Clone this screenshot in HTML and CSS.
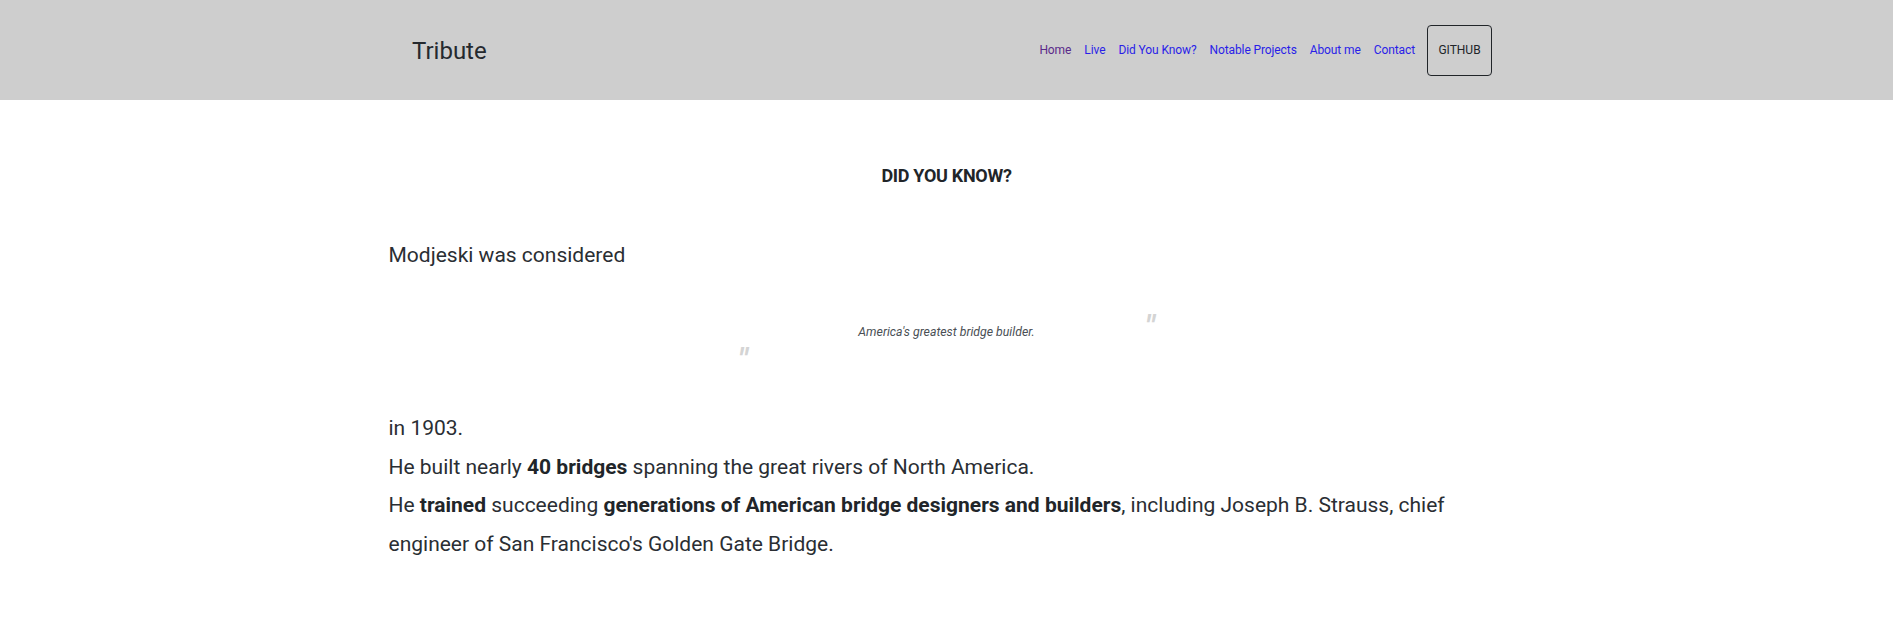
FILE: index.html
```html
<!DOCTYPE html>
<html lang="en">
<head>
<meta charset="utf-8">
<title>Tribute</title>
<link rel="stylesheet" href="styles.css">
</head>
<body>
<header class="navbar">
  <div class="nav-inner">
    <a class="brand" href="#">Tribute</a>
    <nav class="nav-right">
      <ul class="nav-links">
        <li><a class="visited" href="#">Home</a></li>
        <li><a href="#">Live</a></li>
        <li><a href="#">Did You Know?</a></li>
        <li><a href="#">Notable Projects</a></li>
        <li><a href="#">About me</a></li>
        <li><a href="#">Contact</a></li>
      </ul>
      <a class="btn-github" href="#">GITHUB</a>
    </nav>
  </div>
</header>
<main class="container">
  <h2 class="section-title">DID YOU KNOW?</h2>
  <p class="text first">Modjeski was considered</p>
  <blockquote class="quote">
    <span class="mark mark-open">"</span>
    <p class="quote-text">America's greatest bridge builder.</p>
    <span class="mark mark-close">"</span>
  </blockquote>
  <p class="text">in 1903.</p>
  <p class="text">He built nearly <strong>40 bridges</strong> spanning the great rivers of North America.</p>
  <p class="text">He <strong>trained</strong> succeeding <strong>generations of American bridge designers and builders</strong>, including Joseph B. Strauss, chief engineer of San Francisco's Golden Gate Bridge.</p>
</main>
</body>
</html>
```
FILE: styles.css
```css
html, body {
  margin: 0;
  padding: 0;
  background: #ffffff;
}
body {
  font-family: Roboto, "Liberation Sans", sans-serif;
  color: #212529;
}
.navbar {
  background: #cecece;
  height: 100px;
}
.nav-inner {
  max-width: 1140px;
  margin: 0 auto;
  height: 100%;
  box-sizing: border-box;
  padding: 0 24.5px 0 35.5px;
  display: flex;
  align-items: center;
  justify-content: space-between;
}
.brand {
  font-size: 24px;
  font-weight: 400;
  color: #25292e;
  text-decoration: none;
  line-height: 1;
  margin-top: 2px;
}
.nav-right {
  display: flex;
  align-items: center;
  gap: 12px;
}
.nav-links {
  list-style: none;
  margin: 0;
  padding: 0;
  display: flex;
  gap: 13px;
  font-size: 12px;
  letter-spacing: -0.1px;
}
.nav-links a {
  color: #2a1ee8;
  text-decoration: none;
}
.nav-links a.visited {
  color: #5a2a8a;
}
.btn-github {
  display: flex;
  align-items: center;
  justify-content: center;
  box-sizing: border-box;
  height: 51px;
  width: 65px;
  border: 1px solid #212529;
  border-radius: 4px;
  font-size: 12px;
  color: #212529;
  text-decoration: none;
}
.container {
  max-width: 1140px;
  margin: 0 auto;
  padding: 0 12px;
  box-sizing: border-box;
}
.section-title {
  margin: 64px 0 0;
  font-size: 18px;
  line-height: 24px;
  font-weight: 700;
  letter-spacing: -0.3px;
  text-align: center;
  color: #212529;
}
.text {
  margin: 0;
  font-size: 21px;
  font-weight: 400;
  line-height: 38.6px;
  color: #2a2e33;
}
.text strong {
  font-weight: 700;
  color: #212529;
}
.text.first {
  margin-top: 48px;
}
.quote {
  position: relative;
  width: 417px;
  height: 134.4px;
  margin: 0 auto;
  box-sizing: border-box;
  padding-top: 47.4px;
}
.quote-text {
  margin: 0;
  font-size: 12.3px;
  line-height: 20px;
  font-style: italic;
  text-align: center;
  color: #4a4f55;
}
.mark {
  position: absolute;
  font-size: 32px;
  line-height: 32px;
  font-style: italic;
  font-weight: 700;
  color: #d4d4d4;
}
.mark-open {
  left: 0;
  top: 68px;
}
.mark-close {
  right: 0;
  top: 35px;
}
```
